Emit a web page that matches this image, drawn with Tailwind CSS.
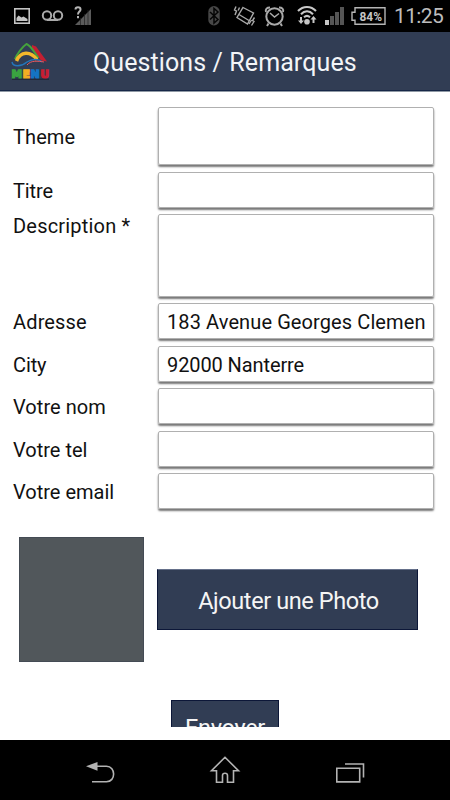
<!DOCTYPE html>
<html lang="fr">
<head>
<meta charset="utf-8">
<title>Questions / Remarques</title>
<script src="https://cdn.jsdelivr.net/npm/@tailwindcss/browser@4"></script>
</head>
<body class="w-[450px] h-[800px] overflow-hidden bg-black font-[Roboto,sans-serif] flex flex-col">
  <!-- Status bar -->
  <div class="h-8 shrink-0 flex items-center justify-between">
    <svg class="w-[110px] h-8" viewBox="0 0 110 32" fill="none">
      <rect x="14.8" y="8.8" width="14.4" height="14.4" stroke="#c4c4c4" stroke-width="1.6"/>
      <path d="M16.500 21v-3l2-2.500 3 2 2-1 4 2.500v2z" fill="#c4c4c4"/>
      <g stroke="#aaa" stroke-width="2"><circle cx="47" cy="15.500" r="4.200"/><circle cx="58" cy="15.500" r="4.200"/><path d="M47 20h11"/></g>
      <path d="M75 25 91 9v16z" fill="#5b5b5b"/>
      <path d="M80.500 18v7M84.500 14v11M88 10v15" stroke="#222" stroke-width=".7"/>
      <path d="M75.500 9.500c0-3 5-3 5 0 0 2.200-2.500 2-2.500 5M78 16v2.200" stroke="#b5b5b5" stroke-width="2"/>
    </svg>
    <div class="flex items-center">
      <svg class="w-[192px] h-8" viewBox="200 0 192 32" fill="none">
        <rect x="208.300" y="6" width="11.400" height="19.500" rx="5.700" fill="#474747"/>
        <path d="m210 12 8 7.500-4 3.500V8.500l4 3.500-8 7.500" stroke="#050505" stroke-width="1.500"/>
        <g stroke="#aaa" stroke-width="1.400"><path d="m243 7.500 10.500 5.500-6 11-10.500-6.500z"/><path d="m239 14.500 10 6M236 6.500l-1.500 3.500 2 1-1.500 4M239.500 7.500l-1.300 3M254.500 17.500l-2 3 1.500 1-2.500 4M251.500 20l-2.500 4"/></g>
        <g stroke="#aaa" stroke-width="2"><circle cx="274.500" cy="16.500" r="8.200"/><path d="m270 13 4.500 4 4.500-3.500" stroke-width="1.500"/><path d="M266 12c-1-3 1-4.500 4-4.500M283 12c1-3-1-4.500-4-4.500M268.500 23.500 267 26M280.500 23.500l1.500 2.500"/></g>
        <g stroke="#c8c8c8" stroke-width="2"><path d="M298 11c5-5.500 13-5.500 18 0M301 14.200c3.500-3.800 8.500-3.800 12 0M304 17.200c2-1.800 4-1.800 6 0"/><path d="M301 17v5M313.500 18v5"/></g>
        <circle cx="307" cy="21.800" r="2.800" fill="#c8c8c8"/>
        <path d="M298 20.500h6l-3 3.500zM310.500 19.500h6l-3-3.500z" fill="#c8c8c8"/>
        <path d="M325 20h4v5h-4z" fill="#c8c8c8"/>
        <path d="M330 16h4v9h-4zM335 12h4v13h-4zM340 7h4v18h-4z" fill="#555"/>
        <path d="M355 7.700h30v16.600h-30v-4h-3v-8h3z" stroke="#b5b5b5" stroke-width="1.400"/>
        <text x="359.500" y="20.500" font-family="Roboto" font-size="12" font-weight="700" textLength="22.500" lengthAdjust="spacingAndGlyphs" fill="#c5c5c5">84%</text>
      </svg>
      <span class="w-[58px] pl-[2px] text-[21px] leading-8 tracking-[-0.65px] text-[#bdbdbd]">11:25</span>
    </div>
  </div>

  <!-- Title bar -->
  <header class="h-[60px] shrink-0 flex items-center bg-[#313d54] border-b border-[#8f99a5] shadow-[inset_0_-1px_0_#172747]">
    <svg class="ml-2 w-[46px] h-12" viewBox="8 38 46 48" fill="none">
      <path d="m32 45 4 1.500 11 15-6-1-9-13z" fill="#c51f31"/>
      <path d="M15 59c2-5 7-12 11.500-15 5 2 8 9 12 14" stroke="#45a33c" stroke-width="2"/>
      <path d="M16.500 61c4-10 14-10 20.500-1.500" stroke="#f3b72b" stroke-width="3.500"/>
      <path d="M12 62c1 5 9 5 15 0 6-4 12-3 15 0" stroke="#2476bb" stroke-width="1.400"/>
      <path d="M27 65c4-5 11-4 17-3" stroke="#ed5960" stroke-width="1"/>
      <text x="11.500" y="78" font-family="DejaVu Sans" font-size="10.500" font-weight="700" stroke-width="1.300" textLength="37.500" lengthAdjust="spacing"><tspan fill="#3aa340" stroke="#3aa340">M</tspan><tspan fill="#f3ae23" stroke="#f3ae23">E</tspan><tspan fill="#1474c4" stroke="#1474c4">N</tspan><tspan fill="#c91e32" stroke="#c91e32">U</tspan></text>
      <path d="M12 79.200h37" stroke="#1b2130" stroke-width="1"/>
    </svg>
    <h1 class="ml-[39px] pt-[2px] text-[25px] leading-[60px] tracking-[0.1px] text-[#f3f5f8] whitespace-nowrap">Questions / Remarques</h1>
  </header>

  <!-- Form -->
  <main class="h-[648px] shrink-0 bg-white pt-[15px] text-[20px] leading-6 text-[#111] flex flex-col">
    <div class="h-[65px] shrink-0 flex pl-[13px]"><label class="w-[145px] pt-[18px] tracking-[0.1px]">Theme</label><div class="w-[276px] h-[58px] rounded-[2px] border border-[#b0b0b0] shadow-[0_2px_2px_#777]"></div></div>
    <div class="h-[42px] shrink-0 flex pl-[13px]"><label class="w-[145px] pt-[7px] tracking-[-0.1px]">Titre</label><div class="w-[276px] h-9 rounded-[2px] border border-[#b0b0b0] shadow-[0_2px_2px_#777]"></div></div>
    <div class="h-[89px] shrink-0 flex pl-[13px]"><label class="w-[145px] tracking-[0.2px]">Description *</label><div class="w-[276px] h-[83px] rounded-[2px] border border-[#b0b0b0] shadow-[0_2px_2px_#777]"></div></div>
    <div class="h-[42.500px] shrink-0 flex pl-[13px]"><label class="w-[145px] pt-[7px] tracking-[0.15px]">Adresse</label><div class="w-[276px] h-9 rounded-[2px] border border-[#b0b0b0] shadow-[0_2px_2px_#777] pl-2 pt-[6px] tracking-[0.1px] whitespace-nowrap">183 Avenue Georges Clemen</div></div>
    <div class="h-[42.500px] shrink-0 flex pl-[13px]"><label class="w-[145px] pt-[7px] tracking-[-0.1px]">City</label><div class="w-[276px] h-9 rounded-[2px] border border-[#b0b0b0] shadow-[0_2px_2px_#777] pl-2 pt-[6px] tracking-[-0.1px] whitespace-nowrap">92000 Nanterre</div></div>
    <div class="h-[42.500px] shrink-0 flex pl-[13px]"><label class="w-[145px] pt-[7px] tracking-[0.05px]">Votre nom</label><div class="w-[276px] h-9 rounded-[2px] border border-[#b0b0b0] shadow-[0_2px_2px_#777]"></div></div>
    <div class="h-[42.500px] shrink-0 flex pl-[13px]"><label class="w-[145px] pt-[7px] tracking-[0px]">Votre tel</label><div class="w-[276px] h-9 rounded-[2px] border border-[#b0b0b0] shadow-[0_2px_2px_#777]"></div></div>
    <div class="h-[42.500px] shrink-0 flex pl-[13px]"><label class="w-[145px] pt-[7px] tracking-[0px]">Votre email</label><div class="w-[276px] h-9 rounded-[2px] border border-[#b0b0b0] shadow-[0_2px_2px_#777]"></div></div>

    <div class="mt-[21.500px] ml-[19px] h-[125px] shrink-0 flex items-center gap-[13px]">
      <div class="w-[125px] h-[125px] bg-[#51575b] border border-[#444b54]"></div>
      <button class="w-[261px] h-[61px] bg-[#313d54] border border-[#0c1738] border-t-[#65708a] text-[23.500px] tracking-[-0.4px] text-[#f5f5f5] whitespace-nowrap pt-[2px] pl-[2px]">Ajouter une Photo</button>
    </div>
    <div class="mt-[38px] ml-[171px] w-[108px] h-[27px] shrink-0 overflow-hidden">
      <button class="w-[108px] h-[56px] bg-[#313d54] border border-[#0c1738] text-[23.500px] tracking-[-0.3px] text-[#f5f5f5]">Envoyer</button>
    </div>
  </main>

  <!-- Navigation bar -->
  <nav class="h-[60px] shrink-0 bg-black">
    <svg class="w-[450px] h-[60px]" viewBox="0 740 450 60" fill="none" stroke="#b3b3b3" stroke-width="1.600">
      <path d="M97 766.300h9.500c9.500 0 9.500 15.500 0 15.500H92"/>
      <path d="M86 766.300 97.500 762v8.700z" fill="#b3b3b3" stroke="none"/>
      <path d="m225 757.300-13.500 13.400h5v11.500h6v-6.700c0-3 5-3 5 0v6.700h6v-11.500h5z"/>
      <path d="M336.800 768.200h22.900v13.700h-22.900zM345 764h18.500v13.500"/>
    </svg>
  </nav>
</body>
</html>
